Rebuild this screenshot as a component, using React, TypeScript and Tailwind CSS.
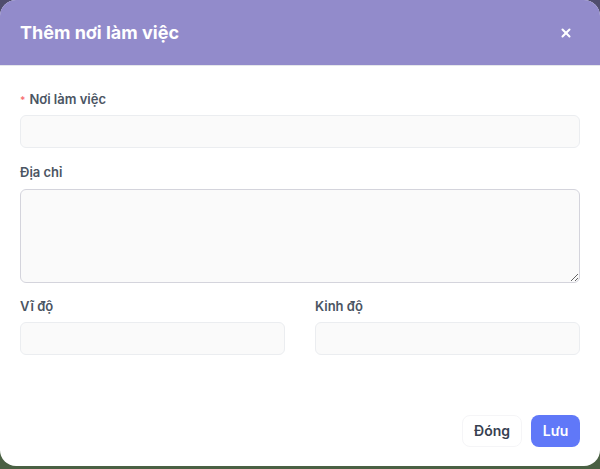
import { X } from "lucide-react";

function Field({
  label,
  required,
  children,
}: {
  label: string;
  required?: boolean;
  children: React.ReactNode;
}) {
  return (
    <div className="flex flex-col">
      <label className="flex h-5 items-center text-[13px] font-semibold text-[#4b5563]">
        {required && <span className="mr-1 text-[10px] text-[#f87171]">*</span>}
        {label}
      </label>
      {children}
    </div>
  );
}

export default function App() {
  const inputCls =
    "mt-[5px] h-[33px] w-full rounded-md border border-[#ebedf0] bg-[#fafafa] px-3 text-sm outline-none";

  return (
    <div
      className="h-[469px] w-[600px] bg-[linear-gradient(to_bottom,#4f4d6d_0%,#4f4d6d_50%,#4a6043_50%)]"
      style={{ fontFamily: "Inter, 'Noto Sans', sans-serif" }}
    >
      <div className="flex h-[466px] flex-col overflow-hidden rounded-2xl bg-white">
        <div className="flex h-[66px] shrink-0 items-center justify-between border-b border-[#e5e7eb] bg-[#928bcb] pl-5 pr-[27px]">
          <h2 className="text-lg font-bold text-white">Thêm nơi làm việc</h2>
          <X className="h-[14px] w-[14px] text-white" strokeWidth={3.5} />
        </div>

        <div className="flex flex-1 flex-col px-5 pt-[24px]">
          <Field label="Nơi làm việc" required>
            <input className={inputCls} />
          </Field>

          <div className="mt-[15px]">
            <Field label="Địa chỉ">
              <textarea className="mt-[6px] h-[94px] w-full rounded-md border border-[#d4d4dc] bg-[#fafafa] px-3 py-2 text-sm outline-none" />
            </Field>
          </div>

          <div className="mt-[14px] grid grid-cols-2 gap-[30px]">
            <Field label="Vĩ độ">
              <input className={inputCls} />
            </Field>
            <Field label="Kinh độ">
              <input className={inputCls} />
            </Field>
          </div>

          <div className="mt-auto mb-[19px] flex justify-end gap-[9px]">
            <button
              type="button"
              className="h-8 w-[60px] rounded-lg border border-[#f5f5f7] bg-white text-sm font-semibold text-[#374151]"
            >
              Đóng
            </button>
            <button
              type="button"
              className="h-8 w-[49px] rounded-lg bg-[#6078f8] text-sm font-semibold text-white"
            >
              Lưu
            </button>
          </div>
        </div>
      </div>
    </div>
  );
}
